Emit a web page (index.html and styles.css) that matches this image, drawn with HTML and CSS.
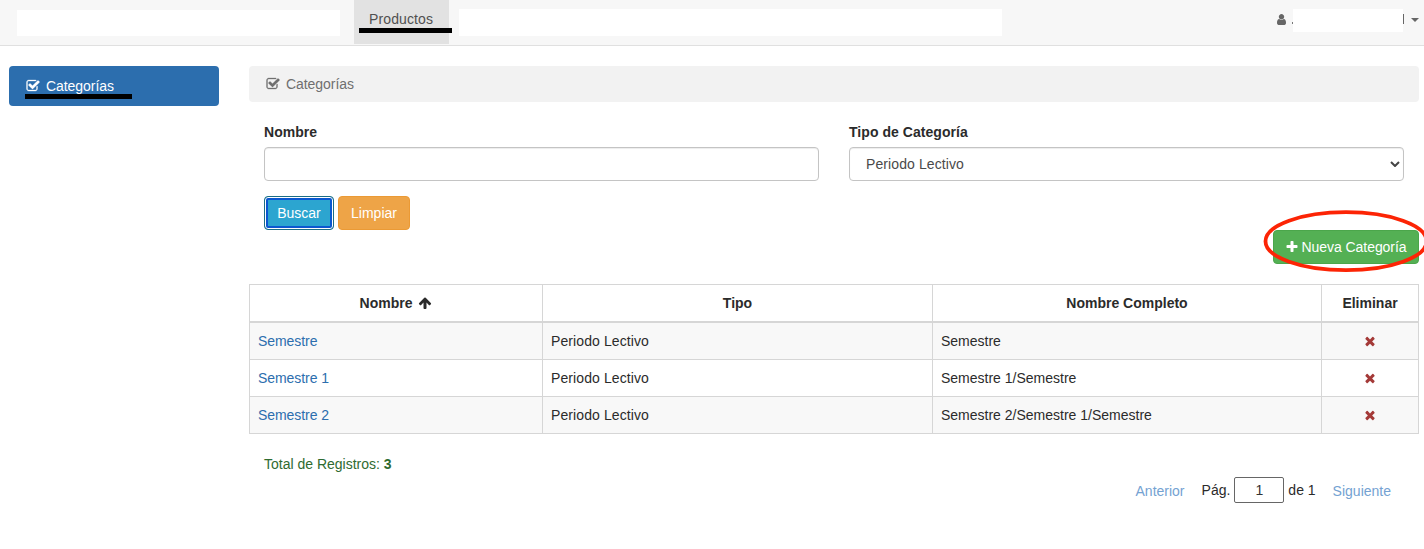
FILE: index.html
```html
<!DOCTYPE html>
<html lang="es">
<head>
<meta charset="utf-8">
<title>Categorías</title>
<link rel="stylesheet" href="styles.css">
</head>
<body>
<svg class="sprite" aria-hidden="true">
  <symbol id="check" viewBox="0 0 1792 1792"><path d="M1472 930v318q0 119-84.5 203.5t-203.5 84.5h-832q-119 0-203.5-84.5t-84.5-203.5v-832q0-119 84.5-203.5t203.5-84.5h832q63 0 117 25 15 7 18 23 3 17-9 29l-49 49q-10 10-23 10-3 0-9-2-23-6-45-6h-832q-66 0-113 47t-47 113v832q0 66 47 113t113 47h832q66 0 113-47t47-113v-254q0-13 9-22l64-64q10-10 23-10 6 0 12 3 20 8 20 29zm231-489l-814 814q-24 24-57 24t-57-24l-430-430q-24-24-24-57t24-57l110-110q24-24 57-24t57 24l263 263 647-647q24-24 57-24t57 24l110 110q24 24 24 57t-24 57z"/></symbol>
  <symbol id="times" viewBox="0 0 1792 1792"><path d="M1490 1322q0 40-28 68l-136 136q-28 28-68 28t-68-28l-294-294-294 294q-28 28-68 28t-68-28l-136-136q-28-28-28-68t28-68l294-294-294-294q-28-28-28-68t28-68l136-136q28-28 68-28t68 28l294 294 294-294q28-28 68-28t68 28l136 136q28 28 28 68t-28 68l-294 294 294 294q28 28 28 68z"/></symbol>
  <symbol id="plus" viewBox="0 0 1792 1792"><path d="M1600 736v192q0 40-28 68t-68 28h-416v416q0 40-28 68t-68 28h-192q-40 0-68-28t-28-68v-416h-416q-40 0-68-28t-28-68v-192q0-40 28-68t68-28h416v-416q0-40 28-68t68-28h192q40 0 68 28t28 68v416h416q40 0 68 28t28 68z"/></symbol>
  <symbol id="arrow-up" viewBox="0 0 1792 1792"><path d="M1675 971q0 51-37 90l-75 75q-38 38-91 38-54 0-90-38l-294-293v704q0 52-37.5 84.5t-90.5 32.5h-128q-53 0-90.5-32.5t-37.5-84.5v-704l-294 293q-36 38-90 38t-90-38l-75-75q-38-38-38-90 0-53 38-91l651-651q35-37 90-37 54 0 91 37l651 651q37 39 37 91z"/></symbol>
  <symbol id="user" viewBox="256 0 1280 1792"><path d="M1536 1399q0 109-62.5 187t-150.5 78h-854q-88 0-150.5-78t-62.5-187q0-85 8.5-160.5t31.5-152 58.5-131 94-89 134.5-34.5q131 128 313 128t313-128q76 0 134.5 34.5t94 89 58.5 131 31.5 152 8.5 160.5zm-256-887q0 159-112.5 271.5t-271.5 112.5-271.5-112.5-112.5-271.5 112.5-271.5 271.5-112.5 271.5 112.5 112.5 271.5z"/></symbol>
</svg>

<nav class="navbar">
  <span class="blank blank-brand"></span>
  <a class="nav-item active">Productos<span class="mark mark-nav"></span></a>
  <span class="blank blank-menu"></span>
  <div class="account">
    <svg class="icon-user"><use href="#user"/></svg>
    <span class="dot"></span>
    <span class="blank blank-user"></span>
    <span class="stem"></span>
    <span class="caret"></span>
  </div>
</nav>

<div class="page">
  <aside class="sidebar">
    <a class="side-item"><svg class="icon"><use href="#check"/></svg>Categorías<span class="mark mark-side"></span></a>
  </aside>

  <main class="main">
    <div class="breadcrumb"><svg class="icon"><use href="#check"/></svg>Categorías</div>

    <form class="filters">
      <div class="field">
        <label for="nombre">Nombre</label>
        <input class="control" id="nombre" type="text">
      </div>
      <div class="field">
        <label for="tipo">Tipo de Categoría</label>
        <div class="control select" id="tipo">Periodo Lectivo
          <svg class="chevron" viewBox="0 0 10 6"><path d="M1 1l4 4 4-4"/></svg>
        </div>
      </div>
    </form>

    <div class="buttons">
      <button class="btn btn-info" type="button">Buscar</button>
      <button class="btn btn-warning" type="button">Limpiar</button>
    </div>

    <div class="create">
      <button class="btn btn-success" type="button"><svg class="icon-plus"><use href="#plus"/></svg>Nueva Categoría</button>
      <svg class="ring" viewBox="0 0 168 66"><ellipse cx="84" cy="33.2" rx="80.5" ry="29"/></svg>
    </div>

    <table class="grid">
      <colgroup><col class="c1"><col class="c2"><col class="c3"><col class="c4"></colgroup>
      <thead>
        <tr><th>Nombre <svg class="icon-sort"><use href="#arrow-up"/></svg></th><th>Tipo</th><th>Nombre Completo</th><th>Eliminar</th></tr>
      </thead>
      <tbody>
        <tr><td><a>Semestre</a></td><td>Periodo Lectivo</td><td>Semestre</td><td class="del"><svg class="icon-del"><use href="#times"/></svg></td></tr>
        <tr><td><a>Semestre 1</a></td><td>Periodo Lectivo</td><td>Semestre 1/Semestre</td><td class="del"><svg class="icon-del"><use href="#times"/></svg></td></tr>
        <tr><td><a>Semestre 2</a></td><td>Periodo Lectivo</td><td>Semestre 2/Semestre 1/Semestre</td><td class="del"><svg class="icon-del"><use href="#times"/></svg></td></tr>
      </tbody>
    </table>

    <div class="total">Total de Registros: <b>3</b></div>
    <div class="pager">
      <a class="prev">Anterior</a>
      <span>Pág.</span>
      <input class="page-no" type="text" value="1">
      <span>de 1</span>
      <a class="next">Siguiente</a>
    </div>
  </main>
</div>
</body>
</html>
```

FILE: styles.css
```css
* { box-sizing: border-box; }

body {
  margin: 0;
  height: 549px;
  overflow: hidden;
  background: #fff;
  color: #2b2b2b;
  font: 14px/20px "Liberation Sans", Arial, sans-serif;
}

svg { fill: currentColor; }
.sprite { display: none; }

/* Top bar */
.navbar {
  display: flex;
  align-items: flex-start;
  height: 46px;
  padding: 0 5px 0 17px;
  background: #f7f7f7;
  border-bottom: 1px solid #e0e0e0;
}
.blank { display: block; background: #fff; }
.blank-brand { width: 323px; height: 26px; margin: 10px 14px 0 0; }
.blank-menu { width: 543px; height: 27px; margin: 9px 0 0 10px; }
.blank-user { width: 110px; height: 23px; margin-top: 9px; }
.nav-item {
  position: relative;
  width: 95px;
  height: 44px;
  padding: 9px 0 0 15px;
  background: #e2e2e2;
  color: #505050;
  letter-spacing: .12px;
}
.mark { position: absolute; height: 5px; background: #000; }
.mark-nav { left: 5px; top: 28px; width: 93px; }
.mark-side { left: 16px; top: 28px; width: 107px; }

.account { display: flex; align-items: flex-start; margin-left: auto; color: #666; }
.icon-user { width: 9px; height: 13px; margin: 13px 6px 0 0; }
.dot { width: 1px; height: 2px; margin-top: 22px; background: #777; }
.stem { width: 1px; height: 10px; margin-top: 14px; background: #666; }
.caret {
  margin: 18px 0 0 7px;
  border: 4px solid transparent;
  border-top-color: #666;
  border-bottom: 0;
}

/* Body columns */
.page { display: flex; gap: 30px; padding: 20px 5px 0 9px; }
.sidebar { width: 210px; }
.main { flex: 1; }
.icon { width: 14px; height: 14px; margin-right: 6px; stroke: currentColor; stroke-width: 40; }
.side-item,
.breadcrumb {
  display: flex;
  align-items: center;
  padding-left: 17px;
  border-radius: 4px;
  letter-spacing: -.06px;
}
.side-item {
  position: relative;
  height: 40px;
  background: #2c6eae;
  color: #fff;
}
.breadcrumb {
  height: 36px;
  background: #f2f2f2;
  color: #6f6f6f;
}

/* Filters */
.filters { display: flex; gap: 30px; padding: 20px 15px 0; }
.field { flex: 1; }
label { display: block; margin-bottom: 5px; font-weight: bold; letter-spacing: .05px; }
.control {
  display: block;
  width: 100%;
  height: 34px;
  padding: 6px 12px;
  border: 1px solid #c4c4c4;
  border-radius: 4px;
  background: #fff;
  box-shadow: inset 0 1px 1px rgba(0, 0, 0, .075);
  color: #4a4a4a;
  font: inherit;
}
.select {
  display: flex;
  align-items: center;
  justify-content: space-between;
  padding: 0 3px 0 16px;
  letter-spacing: .1px;
}
.chevron { width: 10px; height: 6px; fill: none; stroke: #444; stroke-width: 2; }

.buttons { display: flex; gap: 4px; padding: 15px 15px 0; }
.btn {
  display: flex;
  align-items: center;
  justify-content: center;
  height: 34px;
  padding: 0;
  border: 1px solid;
  border-radius: 4px;
  color: #fff;
  font: inherit;
}
.btn-info {
  width: 70px;
  border-color: #1b6d85;
  background: #2ca5d0;
  box-shadow: inset 0 0 0 1px #fff, inset 0 0 0 3px #0b57d0;
}
.btn-warning { width: 72px; border-color: #eb9a35; background: #eea447; }
.btn-success { width: 146px; border-color: #4ba64b; background: #54b054; letter-spacing: -.05px; }
.icon-plus { width: 14px; height: 14px; margin-right: 2px; }
.create { position: relative; display: flex; justify-content: flex-end; }
.ring {
  position: absolute;
  right: -11px;
  top: -22px;
  width: 168px;
  height: 66px;
  fill: none;
  stroke: #fc2405;
  stroke-width: 3.8;
}

/* Results */
.grid {
  width: 1170px;
  margin-top: 20px;
  table-layout: fixed;
  border-collapse: collapse;
}
.c1 { width: 293px; }
.c2 { width: 390px; }
.c3 { width: 389px; }
.c4 { width: 97px; }
.grid th, .grid td { height: 37px; padding: 8px; border: 1px solid #d6d6d6; line-height: 20px; }
.grid th { border-bottom-width: 2px; }
.grid td { text-align: left; }
.grid td:nth-child(2) { letter-spacing: .1px; }
.grid tbody tr:nth-child(odd) { background: #f8f8f8; }
.grid a { color: #2c6eae; letter-spacing: -.06px; }
.icon-sort { width: 14px; height: 14px; margin-left: 2px; vertical-align: -2px; }
.grid .del { text-align: center; color: #a43a38; }
.icon-del { width: 14px; height: 14px; vertical-align: -2px; }

.total { margin-top: 20px; padding-left: 15px; color: #2f6b31; }
.pager { display: flex; align-items: center; justify-content: flex-end; height: 26px; margin-top: 3px; padding-right: 28px; }
.pager a { color: #74a2d2; padding-top: 2px; }
.prev { margin-right: 17px; }
.next { margin-left: 17px; }
.page-no {
  width: 50px;
  height: 26px;
  margin: 0 4px;
  padding: 0;
  border: 1px solid #666;
  border-radius: 2px;
  background: #fff;
  color: #333;
  font: inherit;
  text-align: center;
}
```
